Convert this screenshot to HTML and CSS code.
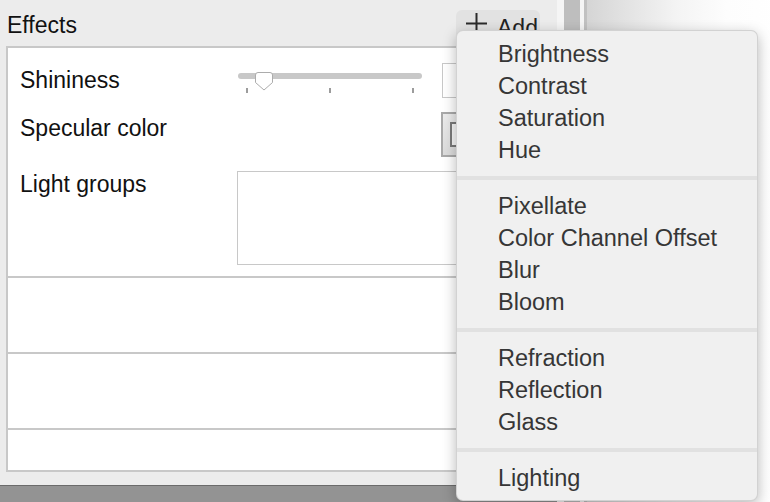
FILE: index.html
```html
<!DOCTYPE html>
<html>
<head>
<meta charset="utf-8">
<link rel="stylesheet" href="styles.css">
</head>
<body>
<div class="app">
  <div class="left">
    <div class="panel">
      <div class="header">
        <div class="title">Effects</div>
        <div class="add-btn">
          <svg class="plus" width="21" height="21" viewBox="0 0 21 21"><path d="M10.5 0V21M0 10.5H21" stroke="#2b2b2b" stroke-width="2" fill="none"/></svg>
          <span class="add-text">Add</span>
        </div>
      </div>
      <div class="box">
        <div class="row row-props">
          <div class="prop prop-shine">
            <div class="label">Shininess</div>
            <div class="slider">
              <div class="track"></div>
              <svg class="thumb" width="20" height="20" viewBox="0 0 20 20"><path d="M1.5 4 Q1.5 1.5 4 1.5 H16 Q18.5 1.5 18.5 4 V11.5 L10 19 L1.5 11.5 Z" fill="#ffffff" stroke="#acacac" stroke-width="1"/></svg>
              <div class="ticks"><span></span><span></span><span></span></div>
            </div>
            <div class="field"></div>
          </div>
          <div class="prop prop-spec">
            <div class="label label-spec">Specular color</div>
            <div class="well"><div class="swatch"></div></div>
          </div>
          <div class="prop prop-groups">
            <div class="label label-groups">Light groups</div>
            <div class="list"></div>
          </div>
        </div>
        <div class="row row-mid"></div>
        <div class="row row-mid"></div>
        <div class="row row-last"></div>
      </div>
    </div>
    <div class="status"></div>
  </div>
  <div class="sash"></div>
  <div class="scroll"></div>
  <div class="gap"></div>
  <div class="edge"></div>
  <div class="right"></div>
</div>

<div class="menu">
  <div class="item">Brightness</div>
  <div class="item">Contrast</div>
  <div class="item">Saturation</div>
  <div class="item">Hue</div>
  <div class="sep"></div>
  <div class="item">Pixellate</div>
  <div class="item">Color Channel Offset</div>
  <div class="item">Blur</div>
  <div class="item">Bloom</div>
  <div class="sep"></div>
  <div class="item">Refraction</div>
  <div class="item">Reflection</div>
  <div class="item">Glass</div>
  <div class="sep"></div>
  <div class="item">Lighting</div>
</div>
</body>
</html>
```

FILE: styles.css
```css
* { box-sizing: border-box; }
html, body {
  margin: 0;
  padding: 0;
  width: 770px;
  height: 502px;
  overflow: hidden;
  background: #ffffff;
  font-family: "Liberation Sans", Arial, sans-serif;
}
.app {
  display: flex;
  height: 502px;
}
.left {
  width: 557px;
  flex: none;
  display: flex;
  flex-direction: column;
}
.panel {
  height: 485px;
  flex: none;
  background: #ececec;
  padding: 0 6px;
}
.header {
  height: 46px;
  display: flex;
  justify-content: space-between;
  align-items: flex-start;
}
.title {
  margin: 12px 0 0 1px;
  font-size: 23px;
  line-height: 27px;
  color: #111111;
}
.add-btn {
  width: 84px;
  height: 30px;
  margin: 10px 11px 0 0;
  padding: 3px 0 0 10px;
  background: #e2e2e2;
  border-radius: 6px;
  display: flex;
  align-items: flex-start;
  gap: 10px;
}
.plus { flex: none; }
.add-text {
  margin-top: 2px;
  font-size: 23px;
  line-height: 27px;
  color: #222222;
}
.box {
  height: 426px;
  background: #ffffff;
  border: 2px solid #c8c8c8;
  display: flex;
  flex-direction: column;
}
.row {
  border-bottom: 2px solid #c8c8c8;
  flex: none;
}
.row-props {
  height: 230px;
  padding: 15px 0 0 12px;
  display: flex;
  flex-direction: column;
  gap: 14px;
}
.row-mid { height: 76px; }
.row-last { height: 40px; border-bottom: none; }
.prop {
  display: flex;
  align-items: flex-start;
}
.label {
  width: 217px;
  flex: none;
  font-size: 23px;
  color: #111111;
}
.prop-shine { height: 35px; }
.prop-shine .label { line-height: 35px; }
.prop-spec { height: 45px; }
.label-spec { line-height: 32px; }
.prop-groups { height: 94px; }
.label-groups { line-height: 27px; }

.slider {
  position: relative;
  width: 184px;
  height: 35px;
  margin-left: 1px;
  flex: none;
}
.track {
  margin-top: 10px;
  height: 6px;
  border-radius: 3px;
  background: #c8c8c8;
}
.thumb {
  position: absolute;
  left: 16px;
  top: 8px;
}
.ticks {
  margin-top: 9px;
  padding: 0 8px;
  display: flex;
  justify-content: space-between;
}
.ticks span {
  width: 2px;
  height: 5px;
  background: #9c9c9c;
}
.field {
  margin-left: 20px;
  width: 60px;
  height: 35px;
  border: 1px solid #c8c8c8;
  background: #ffffff;
  flex: none;
}
.well {
  margin-left: 204px;
  width: 50px;
  height: 45px;
  border: 2px solid #a9a9a9;
  background: linear-gradient(#ececec, #dcdcdc);
  padding: 8px 7px;
  flex: none;
}
.swatch {
  height: 25px;
  border: 2px solid #7a7a7a;
  background: #f7f7f7;
}
.list {
  width: 250px;
  height: 94px;
  border: 1px solid #c8c8c8;
  background: #ffffff;
  flex: none;
}
.status {
  flex: 1;
  background: #939393;
  border-top: 1px solid #6b6b6b;
}
.sash { width: 7px; flex: none; background: #f5f5f5; }
.scroll { width: 16px; flex: none; background: #bebebe; }
.gap { width: 4px; flex: none; background: #f5f5f5; }
.edge { width: 3px; flex: none; background: #c1c1c1; }
.right {
  flex: 1;
  background: linear-gradient(to right, #d5d5d5 0px, #f4f4f4 90px, #fdfdfd 140px, #ffffff 200px);
}

.menu {
  position: absolute;
  left: 456px;
  top: 30px;
  width: 302px;
  height: 471px;
  background: #f0f0f0;
  border: 1px solid rgba(0, 0, 0, 0.12);
  border-radius: 7px;
  box-shadow: 0 4px 14px rgba(0, 0, 0, 0.28);
  padding: 7px 0 5px 0;
}
.item {
  height: 32px;
  line-height: 32px;
  padding-left: 41px;
  font-size: 23.5px;
  color: #363636;
  white-space: nowrap;
}
.sep {
  height: 24px;
  display: flex;
  align-items: center;
}
.sep::before {
  content: "";
  display: block;
  width: 100%;
  height: 4px;
  background: #e1e1e1;
}
```
